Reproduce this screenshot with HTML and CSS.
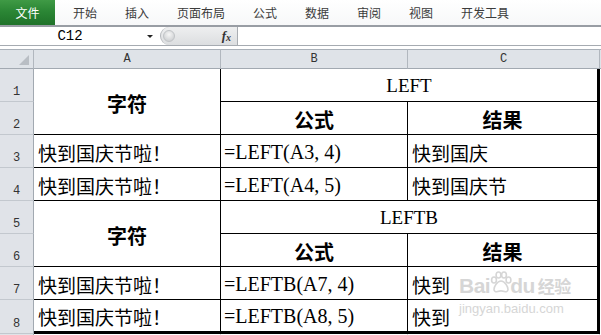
FILE: index.html
```html
<!DOCTYPE html>
<html lang="zh-CN">
<head>
    <meta charset="UTF-8">
    <title>LEFT 与 LEFTB</title>
    <link rel="stylesheet" href="styles.css">
</head>
<body>
    <div class="ribbon">
        <div class="file-tab">文件</div>
        <div class="tab">开始</div>
        <div class="tab">插入</div>
        <div class="tab">页面布局</div>
        <div class="tab">公式</div>
        <div class="tab">数据</div>
        <div class="tab">审阅</div>
        <div class="tab">视图</div>
        <div class="tab">开发工具</div>
    </div>

    <div class="formula-bar">
        <div class="name-box">
            <span class="name">C12</span>
            <span class="arrow"></span>
        </div>
        <div class="fx-box">
            <span class="grip"></span>
            <span class="fx">f<sub>x</sub></span>
        </div>
        <div class="formula-input"></div>
    </div>

    <div class="sheet">
        <div class="corner">
            <svg width="10" height="10" viewBox="0 0 10 10"><polygon points="10,0 10,10 0,10" fill="#b9bec4"/></svg>
        </div>
        <div class="col-head">A</div>
        <div class="col-head">B</div>
        <div class="col-head">C</div>
        <div class="col-head fill"></div>

        <div class="row-head">1</div>
        <div class="cell title two-rows">字符</div>
        <div class="cell latin-head two-cols edge">LEFT</div>
        <div class="fill"></div>

        <div class="row-head">2</div>
        <div class="cell title">公式</div>
        <div class="cell title edge">结果</div>
        <div class="fill"></div>

        <div class="row-head">3</div>
        <div class="cell">快到国庆节啦！</div>
        <div class="cell formula">=LEFT(A3, 4)</div>
        <div class="cell edge">快到国庆</div>
        <div class="fill"></div>

        <div class="row-head">4</div>
        <div class="cell">快到国庆节啦！</div>
        <div class="cell formula">=LEFT(A4, 5)</div>
        <div class="cell edge">快到国庆节</div>
        <div class="fill"></div>

        <div class="row-head">5</div>
        <div class="cell title two-rows">字符</div>
        <div class="cell latin-head two-cols edge">LEFTB</div>
        <div class="fill"></div>

        <div class="row-head">6</div>
        <div class="cell title">公式</div>
        <div class="cell title edge">结果</div>
        <div class="fill"></div>

        <div class="row-head">7</div>
        <div class="cell">快到国庆节啦！</div>
        <div class="cell formula">=LEFTB(A7, 4)</div>
        <div class="cell edge">快到</div>
        <div class="fill"></div>

        <div class="row-head">8</div>
        <div class="cell bottom">快到国庆节啦！</div>
        <div class="cell formula bottom">=LEFTB(A8, 5)</div>
        <div class="cell edge bottom">快到</div>
        <div class="fill"></div>

        <div class="row-head"></div>
        <div class="blank"></div>
        <div class="blank"></div>
        <div class="blank"></div>
        <div class="fill"></div>

        <!-- watermark -->
        <div class="watermark">
            <div class="wm-logo">Bai<svg width="22" height="22" viewBox="0 0 22 22"><g fill="none" stroke="#d6d6d6" stroke-width="1.6"><ellipse cx="4" cy="9" rx="2.4" ry="3"/><ellipse cx="8.5" cy="4" rx="2.4" ry="3"/><ellipse cx="14" cy="4" rx="2.4" ry="3"/><ellipse cx="18.5" cy="9" rx="2.4" ry="3"/><path d="M11 10c-4 0-7 6-7 8.5 0 2 2 2.5 3.5 2 1.5-.4 2.5-.6 3.5-.6s2 .2 3.5.6c1.5.5 3.5 0 3.5-2 0-2.5-3-8.5-7-8.5z"/></g></svg>du<span class="wm-cn">经验</span></div>
            <div class="wm-url">jingyan.baidu.com</div>
        </div>
    </div>
</body>
</html>
```

FILE: styles.css
```css
body {
    margin: 0;
    width: 601px;
    height: 335px;
    overflow: hidden;
    background-color: #fff;
    font-family: "Noto Sans CJK SC", sans-serif;
}
.ribbon {
    display: flex;
    height: 25px;
    background: linear-gradient(#ffffff, #f7f8f9);
    border-bottom: 2px solid #989da4;
}
.file-tab {
    width: 55px;
    height: 25px;
    background: linear-gradient(#3f9a45, #2b8635 45%, #1f7229);
    color: #fff;
    font-size: 12px;
    line-height: 25px;
    text-align: center;
    margin-right: 4px;
}
.tab {
    padding: 0 14px;
    font-size: 12px;
    line-height: 25px;
    color: #3b3b3b;
}
.formula-bar {
    display: flex;
    height: 18px;
    border-bottom: 1px solid #a6abb1;
    margin-bottom: 3px;
}
.name-box {
    width: 158px;
    display: flex;
    align-items: center;
}
.name {
    width: 140px;
    text-align: center;
    font-family: "Liberation Mono", monospace;
    font-size: 14px;
    color: #000;
}
.arrow {
    width: 0;
    height: 0;
    border-left: 3px solid transparent;
    border-right: 3px solid transparent;
    border-top: 3px solid #222;
    margin-left: 7px;
}
.fx-box {
    width: 76px;
    margin-left: 2px;
    display: flex;
    align-items: center;
    justify-content: space-between;
    background: linear-gradient(#eeeff0, #dcdee0);
    border-left: 1px solid #b4b7bb;
    border-right: 1px solid #a9adb2;
    border-radius: 9px 0 0 9px;
}
.grip {
    width: 10px;
    height: 10px;
    border-radius: 50%;
    margin-left: 2px;
    background: radial-gradient(circle at 50% 35%, #f6f6f6, #c4c7ca);
    border: 1px solid #c0c3c6;
}
.fx {
    font-family: "Liberation Serif", serif;
    font-style: italic;
    font-weight: bold;
    font-size: 13px;
    color: #333;
    margin-right: 6px;
}
.fx sub {
    font-size: 10px;
    vertical-align: -1px;
}
.formula-input {
    flex: 1;
}
.sheet {
    position: relative;
    display: grid;
    grid-template-columns: 34px 187px 187px 192px 1fr;
    grid-template-rows: 20px repeat(7, 33px) 34px 1fr;
    height: 286px;
    overflow: hidden;
}
.sheet > div {
    box-sizing: border-box;
}
.corner,
.col-head {
    background-color: #dfe3e8;
    border-top: 1px solid #a9b0b8;
    border-bottom: 1px solid #a2a9b1;
    border-right: 1px solid #b1b7be;
}
.corner {
    display: flex;
    align-items: flex-end;
    justify-content: flex-end;
    padding: 0 4px 3px 0;
}
.corner svg {
    display: block;
}
.col-head {
    font-family: "Liberation Mono", monospace;
    font-size: 12px;
    color: #333;
    text-align: center;
    line-height: 18px;
}
.col-head.fill {
    border-right: none;
}
.row-head {
    background-color: #e0e3e8;
    border-right: 1px solid #a2a9b1;
    border-bottom: 1px solid #c3c8ce;
    font-family: "Liberation Mono", monospace;
    font-size: 12px;
    color: #333;
    display: flex;
    align-items: flex-end;
    justify-content: center;
    padding-bottom: 2px;
}
.cell {
    border-right: 1px solid #000;
    border-bottom: 1px solid #000;
    font-size: 19px;
    color: #000;
    display: flex;
    align-items: center;
    padding: 2px 0 0 4px;
    white-space: nowrap;
}
.cell.edge {
    border-right: 3px solid #000;
}
.cell.bottom {
    border-bottom: 3px solid #000;
}
.title {
    font-size: 20px;
    font-weight: bold;
    justify-content: center;
    padding: 3px 0 0;
}
.latin-head {
    font-family: "Liberation Serif", serif;
    font-size: 19px;
    justify-content: center;
    padding: 1px 0 0;
}
.formula {
    font-family: "Liberation Serif", serif;
    font-size: 20px;
    padding-left: 3px;
}
.two-rows {
    grid-row: span 2;
}
.two-cols {
    grid-column: span 2;
}
.blank {
    border-right: 1px solid #dadcdd;
}
.watermark {
    position: absolute;
    left: 459px;
    top: 222px;
    color: #d6d6d6;
    font-family: "Liberation Sans", sans-serif;
    text-shadow: 0 0 1px #fff;
}
.wm-logo {
    display: flex;
    align-items: flex-end;
    font-size: 21px;
    font-weight: bold;
    line-height: 22px;
    letter-spacing: -0.5px;
}
.wm-logo svg {
    margin: 0 -2px 4px 0;
}
.wm-cn {
    font-family: "Noto Sans CJK SC", sans-serif;
    font-size: 17px;
    margin-left: 3px;
}
.wm-url {
    font-size: 13px;
    margin-top: 4px;
}
```
